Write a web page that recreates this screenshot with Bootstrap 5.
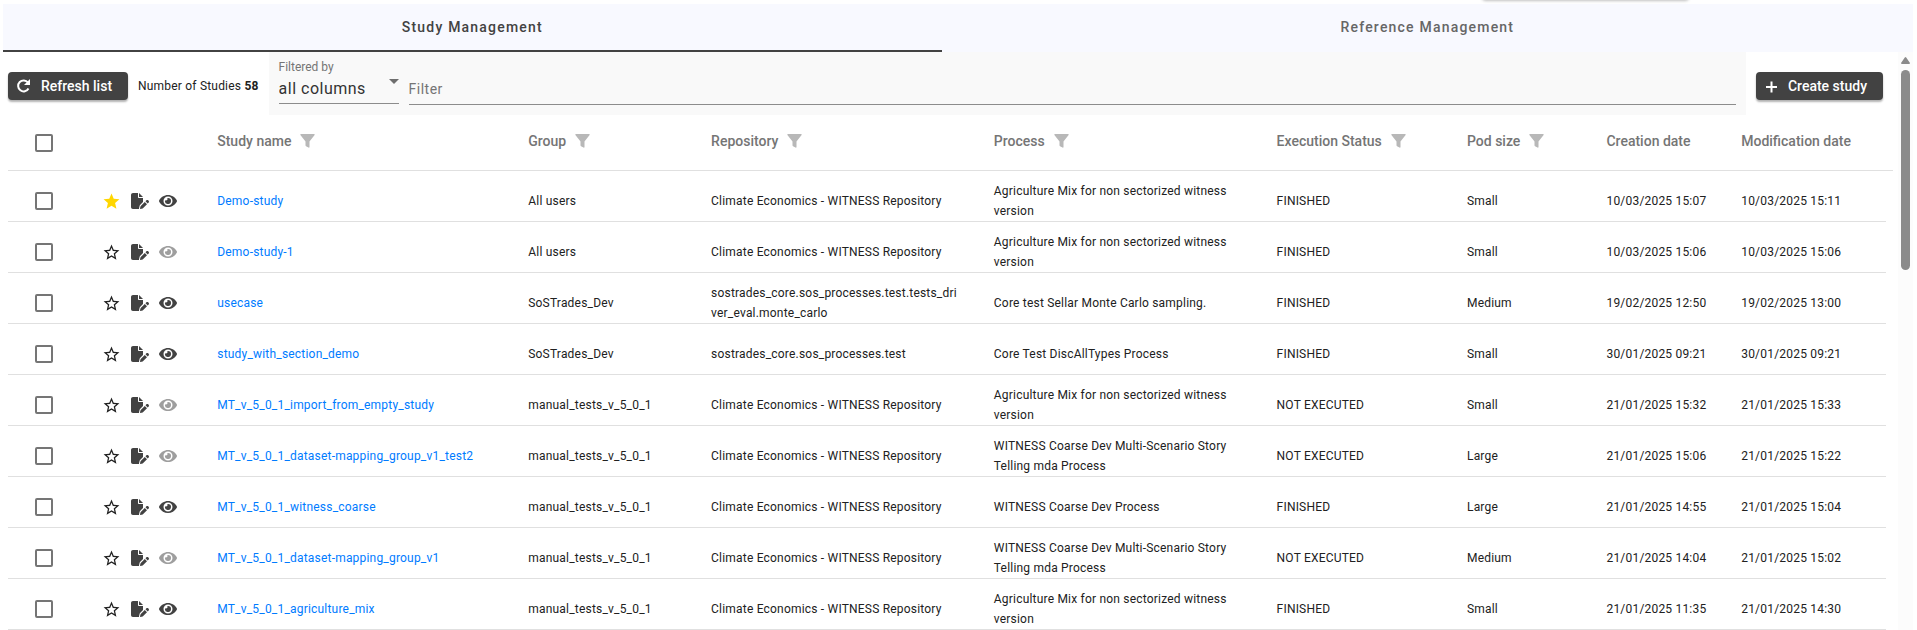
<!DOCTYPE html>
<html lang="en">
<head>
<meta charset="utf-8">
<meta name="viewport" content="width=device-width, initial-scale=1">
<title>Study Management</title>
<link href="https://cdn.jsdelivr.net/npm/bootstrap@5.3.0/dist/css/bootstrap.min.css" rel="stylesheet">
<style>
  body { font-family: Roboto, "Liberation Sans", sans-serif; font-size: 12px; line-height: 20px; color: #212121; background: #fff; }
  .page { padding: 4px 4px 0 3px; }
  /* lower edge of the floating panel above the tabs */
  .panel-edge { top: -8px; left: 77.3%; width: 10.8%; height: 8px; border-radius: 4px; box-shadow: 0 1px 3px rgba(0,0,0,.25); }
  .tabs { background: #f8f9ff; }
  .tab { height: 48px; padding: 0 24px; border: 0; border-bottom: 2px solid transparent; background: none; color: #666; font-size: 14px; font-weight: 500; letter-spacing: 1.2px; }
  .tab.active { color: #424242; border-bottom-color: #424242; }
  .study-list { padding: 0 5px; }
  .toolbar { height: 63px; margin-right: 10px; }
  .tool-btn { height: 28px; margin-top: 5px; padding: 0 16px 0 8px; gap: 9px; border: 0; border-radius: 4px; background: #424242; color: #fff; font-size: 14px; font-weight: 500; white-space: nowrap; box-shadow: 0 2px 2px rgba(0,0,0,.3); }
  .study-count { margin: 5px 10px 0; letter-spacing: .2px; }
  .filter-bar { background: #f9f9f9; padding: 0 10px; margin-right: 10px; gap: 10px; }
  .filter-field { border-bottom: 1px solid #8c8c8c; color: #333; }
  .filter-field label { color: #757575; line-height: 16px; }
  .filter-field select, .filter-field input { display: block; width: 100%; height: 24px; margin-top: 2px; border: 0; padding: 0; background: none; color: inherit; font-size: 16px; letter-spacing: .5px; appearance: none; outline: 0; }
  .filter-field input { font-size: 14px; }
  .filter-field input::placeholder { color: #757575; opacity: 1; }
  .by { width: 120px; height: 48px; margin-top: 4px; padding-top: 3px; }
  .by svg { right: 0; top: 23px; pointer-events: none; }
  .query { height: 30px; margin-top: 23px; }
  .studies { table-layout: fixed; width: 100%; border-collapse: separate; border-spacing: 0; letter-spacing: .2px; }
  .studies th { height: 56px; padding: 0 0 4px; border-bottom: 1px solid #e0e0e0; color: #757575; font-size: 14px; font-weight: 500; letter-spacing: 0; white-space: nowrap; }
  .studies th.pick { padding: 0; }
  .studies th svg { margin: -2px 0 0 9px; fill: #b8b8b8; }
  .studies td { height: 51px; padding: 10px 33px 0 0; border-bottom: 1px solid #e0e0e0; vertical-align: middle; overflow-wrap: anywhere; }
  .studies td.oneline { padding-right: 0; white-space: nowrap; }
  .studies td.rim { border: 0; padding: 0; }
  .studies a { color: #007bff; text-decoration: none; }
  .studies input { appearance: none; display: block; width: 18px; height: 18px; margin: 0 0 0 27px; border: 2px solid #757575; border-radius: 2px; }
  .studies input:checked { background: #424242; }
  .icon-btn { border: 0; padding: 0; background: none; color: #424242; line-height: 0; }
  .icon-btn.fav { color: #ffd600; }
  .icon-btn.line { color: #212121; }
  .icon-btn:disabled { color: #9e9e9e; }
  .tools-set { gap: 10px; height: 20px; }
  .scroll { width: 15px; background: #fcfcfc; padding-top: 5px; }
  .thumb { width: 9px; height: 200px; margin-top: 6px; border-radius: 5px; background: #8b8b8b; }
</style>
</head>
<body>
<svg class="d-none" xmlns="http://www.w3.org/2000/svg">
  <symbol id="star" viewBox="0 0 24 24"><path d="M12 17.27 18.18 21l-1.64-7.03L22 9.24l-7.19-.61L12 2 9.19 8.63 2 9.24l5.46 4.73L5.82 21z"/></symbol>
  <symbol id="star-line" viewBox="0 0 24 24"><path d="m22 9.24-7.19-.62L12 2 9.19 8.63 2 9.24l5.46 4.73L5.82 21 12 17.27 18.18 21l-1.63-7.03L22 9.24zM12 15.4l-3.76 2.27 1-4.28-3.32-2.88 4.38-.38L12 6.1l1.71 4.04 4.38.38-3.32 2.88 1 4.28L12 15.4z"/></symbol>
  <symbol id="file-pen" viewBox="0 0 576 512"><path d="M0 64C0 28.7 28.7 0 64 0H224V128c0 17.7 14.3 32 32 32H384V285.7l-86.8 86.8c-10.3 10.3-17.5 23.1-21 37.2l-18.7 74.9c-2.3 9.2-1.8 18.8 1.3 27.5H64c-35.3 0-64-28.7-64-64V64zm384 64H256V0L384 128zM549.8 235.7l14.4 14.4c15.6 15.6 15.6 40.9 0 56.6l-29.4 29.4-71-71 29.4-29.4c15.6-15.6 40.9-15.6 56.6 0zM311.9 417L441.1 287.8l71 71L382.9 487.9c-4.1 4.1-9.2 7-14.9 8.4l-60.1 15c-5.5 1.4-11.2-.2-15.2-4.2s-5.6-9.7-4.2-15.2l15-60.1c1.4-5.6 4.3-10.8 8.4-14.9z"/></symbol>
  <symbol id="eye" viewBox="0 0 576 512"><path d="M572.52 241.4C518.29 135.59 410.93 64 288 64S57.68 135.64 3.48 241.41a32.35 32.35 0 0 0 0 29.19C57.71 376.41 165.07 448 288 448s230.32-71.64 284.52-177.41a32.35 32.35 0 0 0 0-29.19zM288 400a144 144 0 1 1 144-144 143.93 143.93 0 0 1-144 144zm0-240a95.31 95.31 0 0 0-25.31 3.79 47.85 47.85 0 0 1-66.9 66.9A95.78 95.78 0 1 0 288 160z"/></symbol>
  <symbol id="funnel" viewBox="0 0 15 14"><path d="M1 0h13q1.200 0 .6 1L9.500 7.500V13q0 1-1 .6L6 12.200q-.5-.3-.5-.9V7.500L.4 1Q-.2 0 1 0z"/></symbol>
</svg>

<div class="page vh-100 d-flex flex-column overflow-hidden position-relative">
  <div class="panel-edge position-absolute"></div>
  <div class="tabs d-flex flex-shrink-0" role="tablist">
    <button class="tab active flex-grow-1" role="tab" aria-selected="true">Study Management</button>
    <button class="tab flex-grow-1" role="tab" aria-selected="false">Reference Management</button>
  </div>
  <div class="d-flex flex-grow-1 overflow-hidden">
    <main class="study-list flex-grow-1">
      <div class="toolbar d-flex align-items-center">
        <button class="tool-btn d-flex align-items-center flex-shrink-0">
          <svg width="16" height="16" viewBox="0 0 16 16" fill="none" stroke="#fff" stroke-width="2" aria-hidden="true"><path d="M12.500 10.500A5.500 5.500 0 1 1 12 4.500"/><path d="M14 1v6H8z" fill="#fff" stroke="none"/></svg>
          Refresh list
        </button>
        <div class="study-count text-nowrap">Number of Studies <b>58</b></div>
        <div class="filter-bar d-flex flex-grow-1 h-100">
          <div class="filter-field by position-relative flex-shrink-0">
            <label for="by" class="d-block">Filtered by</label>
            <select id="by"><option>all columns</option><option>Study name</option></select>
            <svg class="position-absolute" width="10" height="5" viewBox="0 0 10 5" fill="#6e6e6e" aria-hidden="true"><path d="M0 0h10L5 5z"/></svg>
          </div>
          <div class="filter-field query flex-grow-1"><input type="text" placeholder="Filter" aria-label="Filter"></div>
        </div>
        <button class="tool-btn d-flex align-items-center flex-shrink-0">
          <svg width="15" height="16" viewBox="0 0 15 16" stroke="#fff" stroke-width="2" aria-hidden="true"><path d="M2 9h11M7.500 3.500v11"/></svg>
          Create study
        </button>
      </div>

      <table class="studies">
        <colgroup>
          <col style="width:5%"><col style="width:6.1%"><col style="width:16.5%"><col style="width:9.7%"><col style="width:15%"><col style="width:15%"><col style="width:10.1%"><col style="width:7.4%"><col style="width:7.15%"><col><col style="width:7px">
        </colgroup>
        <thead>
          <tr>
            <th class="pick"><input type="checkbox" aria-label="Select all studies"></th><th></th>
            <th>Study name<svg width="15" height="14"><use href="#funnel"/></svg></th>
            <th>Group<svg width="15" height="14"><use href="#funnel"/></svg></th>
            <th>Repository<svg width="15" height="14"><use href="#funnel"/></svg></th>
            <th>Process<svg width="15" height="14"><use href="#funnel"/></svg></th>
            <th>Execution Status<svg width="15" height="14"><use href="#funnel"/></svg></th>
            <th>Pod size<svg width="15" height="14"><use href="#funnel"/></svg></th>
            <th>Creation date</th><th>Modification date</th><th></th>
          </tr>
        </thead>
        <tbody id="rows"></tbody>
      </table>
    </main>
    <div class="scroll d-flex flex-column align-items-center flex-shrink-0" aria-hidden="true">
      <svg width="9" height="7" viewBox="0 0 9 7" fill="#8b8b8b" class="flex-shrink-0"><path d="M3.800.6q.7-1 1.400 0L9 6q0 1-1 1H1Q0 7 0 6z"/></svg>
      <div class="thumb flex-shrink-0"></div>
    </div>
  </div>
</div>

<script>
  const witness = "Climate Economics - WITNESS Repository";
  const mix = "Agriculture Mix for non sectorized witness version";
  const story = "WITNESS Coarse Dev Multi-Scenario Story Telling mda Process";
  const tests = "manual_tests_v_5_0_1";
  // name, group, repository, process, status, pod size, created, modified, favourite, viewable
  const studies = [
    ["Demo-study", "All users", witness, mix, "FINISHED", "Small", "10/03/2025 15:07", "10/03/2025 15:11", true, true],
    ["Demo-study-1", "All users", witness, mix, "FINISHED", "Small", "10/03/2025 15:06", "10/03/2025 15:06", false, false],
    ["usecase", "SoSTrades_Dev", "sostrades_core.sos_processes.test.tests_driver_eval.monte_carlo", "Core test Sellar Monte Carlo sampling.", "FINISHED", "Medium", "19/02/2025 12:50", "19/02/2025 13:00", false, true],
    ["study_with_section_demo", "SoSTrades_Dev", "sostrades_core.sos_processes.test", "Core Test DiscAllTypes Process", "FINISHED", "Small", "30/01/2025 09:21", "30/01/2025 09:21", false, true],
    ["MT_v_5_0_1_import_from_empty_study", tests, witness, mix, "NOT EXECUTED", "Small", "21/01/2025 15:32", "21/01/2025 15:33", false, false],
    ["MT_v_5_0_1_dataset-mapping_group_v1_test2", tests, witness, story, "NOT EXECUTED", "Large", "21/01/2025 15:06", "21/01/2025 15:22", false, false],
    ["MT_v_5_0_1_witness_coarse", tests, witness, "WITNESS Coarse Dev Process", "FINISHED", "Large", "21/01/2025 14:55", "21/01/2025 15:04", false, true],
    ["MT_v_5_0_1_dataset-mapping_group_v1", tests, witness, story, "NOT EXECUTED", "Medium", "21/01/2025 14:04", "21/01/2025 15:02", false, false],
    ["MT_v_5_0_1_agriculture_mix", tests, witness, mix, "FINISHED", "Small", "21/01/2025 11:35", "21/01/2025 14:30", false, true]
  ];
  document.getElementById("rows").innerHTML = studies.map(([name, group, repo, process, status, pod, created, modified, fav, view]) => `
    <tr>
      <td class="oneline"><input type="checkbox" aria-label="Select ${name}"></td>
      <td class="oneline"><div class="tools-set d-flex align-items-center">
        <button class="icon-btn ${fav ? "fav" : "line"}" aria-label="Favourite"><svg width="19" height="19" fill="currentColor"><use href="#${fav ? "star" : "star-line"}"/></svg></button>
        <button class="icon-btn" aria-label="Edit"><svg width="18" height="16" fill="currentColor"><use href="#file-pen"/></svg></button>
        <button class="icon-btn" aria-label="View" ${view ? "" : "disabled"}><svg width="18" height="18" fill="currentColor"><use href="#eye"/></svg></button>
      </div></td>
      <td class="oneline"><a href="#">${name}</a></td>
      <td>${group}</td><td>${repo}</td><td>${process}</td><td class="oneline">${status}</td><td>${pod}</td>
      <td class="oneline">${created}</td><td class="oneline">${modified}</td><td class="rim"></td>
    </tr>`).join("");
</script>
<script src="https://cdn.jsdelivr.net/npm/bootstrap@5.3.0/dist/js/bootstrap.bundle.min.js"></script>
</body>
</html>
